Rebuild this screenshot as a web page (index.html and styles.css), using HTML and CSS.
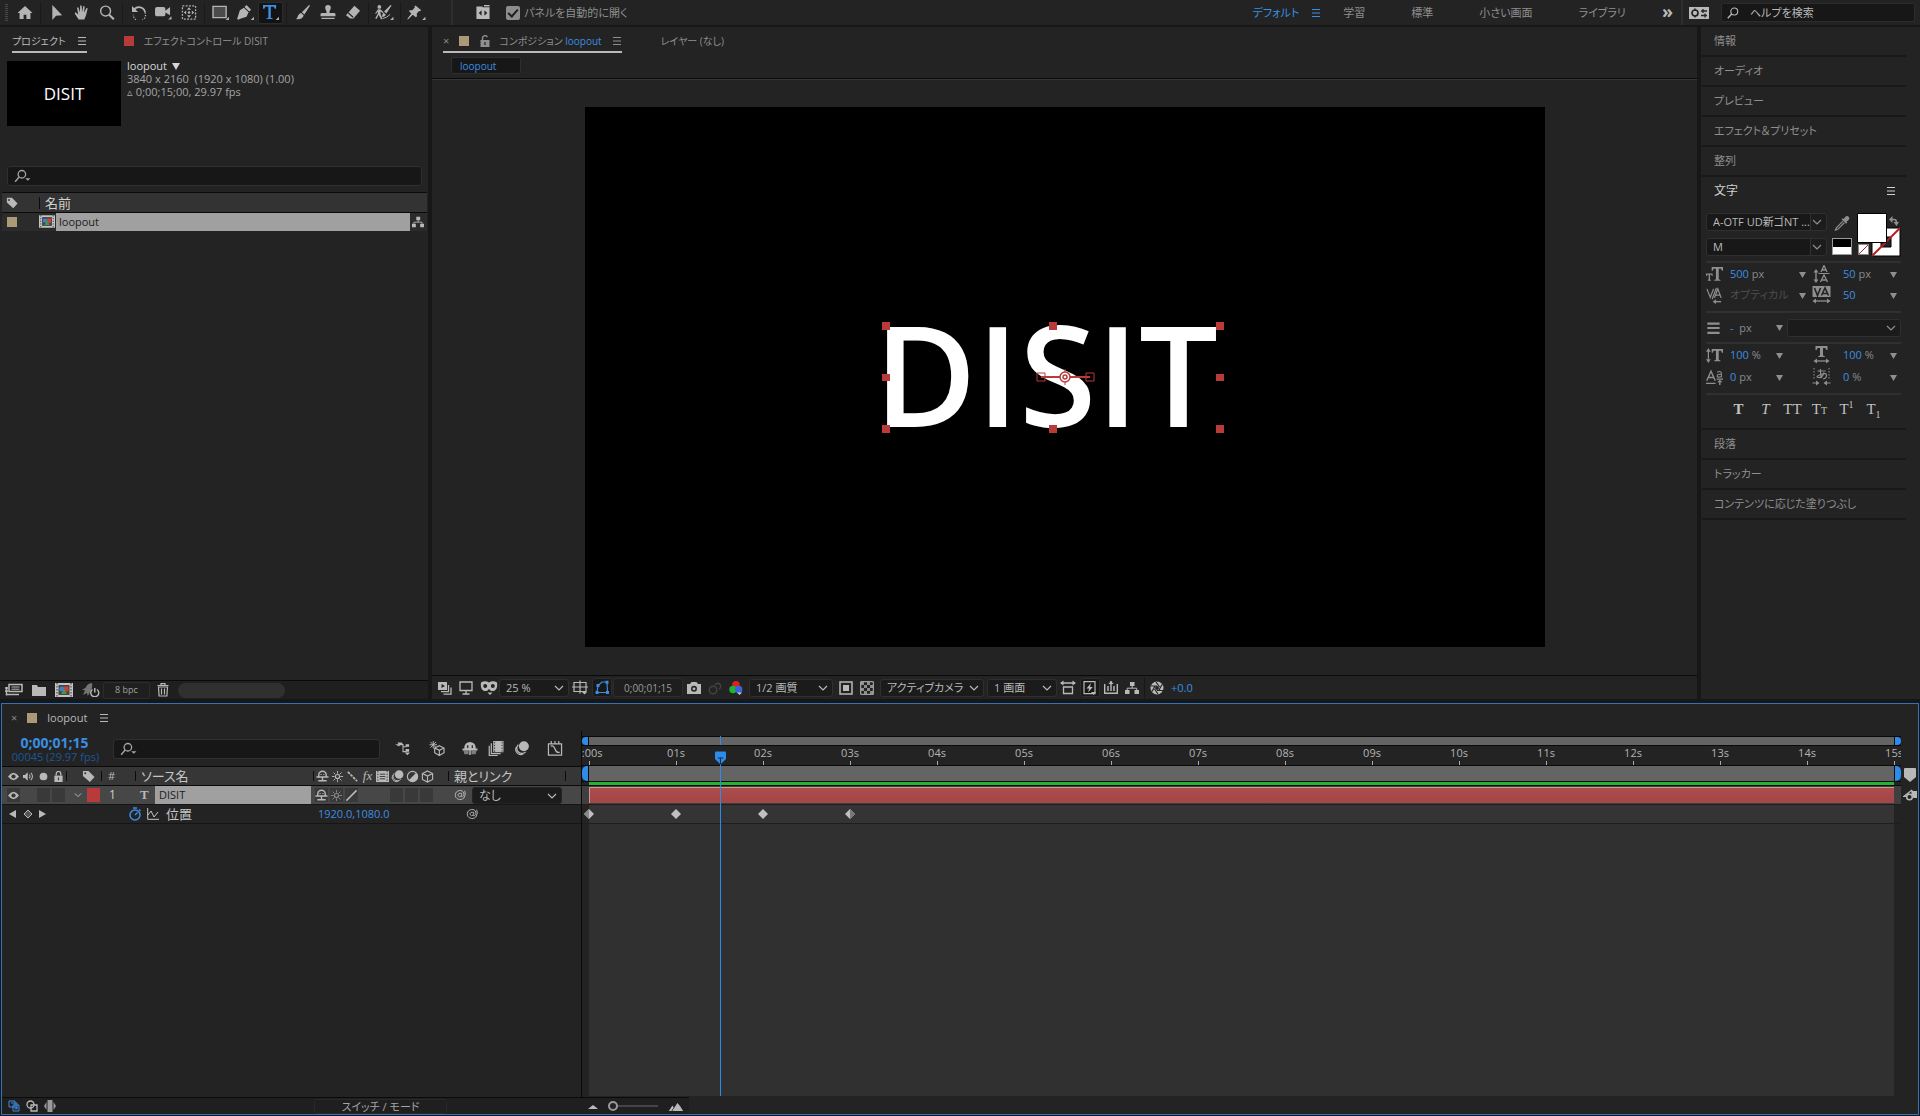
FILE: index.html
```html
<!DOCTYPE html>
<html lang="ja">
<head>
<meta charset="utf-8">
<meta name="viewport" content="width=device-width, initial-scale=1">
<title>loopout</title>
<link rel="stylesheet" href="styles.css">
</head>
<body>
<svg class="sprite" aria-hidden="true">
  <symbol id="home" viewBox="0 0 16 16"><path d="M8 1 0 8.500h2.200V15h4.300v-4.500h3V15h4.300V8.500H16z"/></symbol>
  <symbol id="arrow" viewBox="0 0 16 16"><path d="M3 0v16l4-4.500 6.500-.6z"/></symbol>
  <symbol id="hand" viewBox="0 0 16 16"><path d="M4.500 15.500C3 13 1.500 11 .4 9.200c-.5-1 .7-1.700 1.500-.9L4 10.300 2.800 3.500c-.1-1.200 1.300-1.400 1.600-.3L5.800 8 6 1.300C6 0 7.600 0 7.700 1.300L8 7.800l1.200-6C9.500.6 10.900.9 10.800 2L10.200 8.300l2.300-4.500c.5-1 1.700-.5 1.400.6-.8 2.600-1 4.600-1.800 7.100-.5 1.600-1.200 2.500-1.600 4z"/></symbol>
  <symbol id="loupe" viewBox="0 0 16 16"><g fill="none" stroke="currentColor"><circle cx="6.500" cy="6.500" r="5.300" stroke-width="1.500"/><path d="m10.300 10.300 5 5" stroke-width="2.200"/></g></symbol>
  <symbol id="search" viewBox="0 0 16 16"><g fill="none" stroke="currentColor"><circle cx="9.700" cy="6" r="4.600" stroke-width="1.500"/><path d="M6.300 9.300 1 15" stroke-width="1.800"/></g></symbol>
  <symbol id="searchmenu" viewBox="0 0 20 16"><g fill="none" stroke="currentColor"><circle cx="8.700" cy="6" r="4.300" stroke-width="1.500"/><path d="M5.600 9.200 1 14.500" stroke-width="1.600"/></g><path d="M12.500 10.500h6l-3 3z"/></symbol>
  <symbol id="rotate" viewBox="0 0 16 16"><path d="M2.500 5.500A6.500 6.500 0 0 1 14.500 8" fill="none" stroke="currentColor" stroke-width="1.800"/><path d="M14.500 8A6.500 6.500 0 1 1 2 10.500" fill="none" stroke="currentColor" stroke-width="1.400" stroke-dasharray="1.300 1.500"/><path d="M.5 1v6.500H7z"/></symbol>
  <symbol id="camera" viewBox="0 0 18 16"><path d="M0 4q0-2 2-2h7q2 0 2 2v2l5-4v9l-5-3v2q0 2-2 2H2q-2 0-2-2z"/><path d="M17.500 12v3.500H14z"/></symbol>
  <symbol id="panbehind" viewBox="0 0 16 16"><rect x="1" y="1" width="14" height="14" fill="none" stroke="currentColor" stroke-width="1.400" stroke-dasharray="2 1.500"/><path d="m8 2.500 2.200 2.500H5.800zm0 11L5.800 11h4.400zM2.500 8 5 5.800v4.400zm11 0L11 10.200V5.800z"/><circle cx="8" cy="8" r="1.300"/></symbol>
  <symbol id="rect" viewBox="0 0 18 16"><path d="M1 1.500h14v12H1z" fill="#4b4b4b" stroke="currentColor" stroke-width="1.500"/><path d="M18 12.500V16h-3.500z"/></symbol>
  <symbol id="pen" viewBox="0 0 18 16"><path d="M10 0 15 5l-2 2-5-5zM7.300 2.800l5 4.800-2.200 5L1 15.500l4.500-5a1.500 1.500 0 1 1 .8.800L2 15.600 0 15 3 5.500z"/><path d="M18 12.500V16h-3.500z"/></symbol>
  <symbol id="type" viewBox="0 0 18 16"><path d="M1 0h14v4h-1.500l-1-2.200H9.300v11.700l2.200.8V15h-7v-.7l2.200-.8V1.800H3.500L2.500 4H1z"/><path d="M18 12.500V16h-3.500z" fill="#b4b4b4"/></symbol>
  <symbol id="brush" viewBox="0 0 16 16"><path d="m15.500.5-6 9.500-2.700-2.300L14.500 0zM6 8.500l2.700 2.400C8 14.500 4.500 15.800.5 15 3 13.500 2 9.500 6 8.500z"/></symbol>
  <symbol id="stamp" viewBox="0 0 16 16"><path d="M5 3a3 3 0 0 1 6 0c0 2-1.500 2.500-1.500 5.500H15q1 0 1 2V12H0v-1.500q0-2 1-2h5.500C6.500 5.500 5 5 5 3zM1 13.500h14V15H1z"/></symbol>
  <symbol id="eraser" viewBox="0 0 16 16"><path d="m9.500.8 6 5.200-7 8.500H5L.5 10.800z"/><path d="m2.800 8.300 5.400 4.800" stroke="#232323" stroke-width="1.200"/></symbol>
  <symbol id="roto" viewBox="0 0 20 16"><circle cx="4.500" cy="2" r="2"/><path d="m3 4.500 3 .2 3 3-.8 1-2.400-2v3l2 5-1.400.8-2.600-5L1.500 15l-1.400-.8L3 9 2.500 7 1 9.500 0 9zM17.500.5 12 9 9.500 7 16.500 0zM9 8.300l2.400 2c-1 2.200-2.400 2.500-4.400 2 1-1 .5-3 2-4z"/><path d="M8 14.500q5-1 8-4.500" fill="none" stroke="currentColor"/><path d="M19.500 12.500V16H16z"/></symbol>
  <symbol id="pin" viewBox="0 0 20 16"><path d="m9 .5 6 5.200-1.300 1-1-.3-2.500 3 .3 2.600-1.200 1L6 10.500 1.500 15 0 15.500.7 14 4.500 9 1.800 6.500l1.200-1 2.500.2 2.700-3L7.800 1.600z"/><path d="M19.500 12.500V16H16z"/></symbol>
  <symbol id="panels" viewBox="0 0 16 16"><path d="M1 1.500h6.500v1H15V15H1z"/><path d="M9 0h6v1.500H9z"/><path d="M6.500 5.500v6L3.500 8.500zm3 0v6l3-3z" fill="#232323"/></symbol>
  <symbol id="menu" viewBox="0 0 10 10"><path d="M1 1.500h8M1 5h8M1 8.500h8" fill="none" stroke="currentColor" stroke-width="1.200"/></symbol>
  <symbol id="tag" viewBox="0 0 14 14"><path d="M1 1h6l6.500 6.500-5 5.500L1 6.500z"/><circle cx="3.500" cy="3.500" r="1.100" fill="#333"/></symbol>
  <symbol id="comp" viewBox="0 0 18 14"><path d="M0 0h18v14H0z" fill="#c4c4c4"/><path d="M2 0v14M16 0v14" stroke="#333" stroke-dasharray="1.500 1.500"/><path d="M3.500 2h11v10h-11z" fill="#444"/><path d="M8.500 3.500h5v5h-5z" fill="#cf4039"/><circle cx="6.800" cy="6" r="2.500" fill="#3f7fd0"/><path d="m9 5.500 3 5.500H6z" fill="#3f9a46"/></symbol>
  <symbol id="flow" viewBox="0 0 14 14"><path d="M5 1h4.500v4H5zM0 9h4.500v4H0zm9.500 0H14v4H9.500z"/><path d="M7.200 5v2.200M2.200 9V7.200h9.500V9" fill="none" stroke="currentColor"/></symbol>
  <symbol id="interpret" viewBox="0 0 18 14"><path d="M4 1.500h13v7H4z" fill="none" stroke="currentColor" stroke-width="1.500"/><path d="M6.500 4h8M6.500 6.200h8" stroke="currentColor"/><path d="M1.500 4v8.500M0 5h3M0 8h3M2 11.500h12" fill="none" stroke="currentColor" stroke-width="1.500"/></symbol>
  <symbol id="folder" viewBox="0 0 14 12"><path d="M0 1h5l1 2h8v9H0z"/></symbol>
  <symbol id="rocket" viewBox="0 0 18 14"><path d="M10 0Q5 .5 3.500 5L0 6.500l3 1L1 12l4-2 .8 3L8 9q3-4 2-9z" opacity=".55"/><path d="M10.500 6.500a4 4 0 1 0 4.500 0M12.800 5v4.500" fill="none" stroke="currentColor" stroke-width="1.400"/></symbol>
  <symbol id="trash" viewBox="0 0 12 14"><path d="M1.500 4h9l-.6 9H2.100zM.5 2.500h11M4 2V.7h4V2M4.500 5.500v6m3-6v6" fill="none" stroke="currentColor" stroke-width="1.200"/></symbol>
  <symbol id="stack" viewBox="0 0 14 14"><path d="M0 1h9v8H0z"/><path d="M3.500 3v4L7 5z" fill="#232323"/><path d="M10.500 4v6.700H3M13 6.500v6.700H5.500" fill="none" stroke="currentColor" stroke-width="1.300"/></symbol>
  <symbol id="monitor" viewBox="0 0 14 14"><path d="M1 1h12v8.500H1zM7 9.500v3M3.500 13h7" fill="none" stroke="currentColor" stroke-width="1.300"/></symbol>
  <symbol id="mask" viewBox="0 0 18 14"><path d="M1 1.500Q0 8 4 10h3l2-2 2 2h3q4-2 3-8.500Q13-1 9 1.500 5-1 1 1.500z"/><circle cx="5.200" cy="5" r="2" fill="#232323"/><circle cx="12.800" cy="5" r="2" fill="#232323"/><path d="M7.500 11.500h5L10 14z"/></symbol>
  <symbol id="guides" viewBox="0 0 16 14"><path d="M2 2h12v9H2zM8 0v13M0 6.500h16" fill="none" stroke="currentColor" stroke-width="1.200"/><path d="M10 11.500h5L12.500 14z"/></symbol>
  <symbol id="shape" viewBox="0 0 16 14"><path d="M3 12 4 5l4-3.500h5L13.500 12z" fill="none" stroke="currentColor" stroke-width="1.200"/><path d="M1.500 10.500h3v3h-3zm10.500 0h3v3h-3zM11.500.2h3v3h-3zM2.500 3.500h3v3h-3z"/></symbol>
  <symbol id="photo" viewBox="0 0 14 14"><path d="M0 3h3l1.500-2h5L11 3h3v10H0z"/><circle cx="7" cy="7.800" r="3" fill="#232323"/><circle cx="7" cy="7.800" r="1.400"/></symbol>
  <symbol id="ghost" viewBox="0 0 14 14"><g fill="none" stroke="#444" stroke-width="1.400"><circle cx="5" cy="9" r="3.800"/><path d="M7 4a3 3 0 1 1 4 4"/></g></symbol>
  <symbol id="rgb" viewBox="0 0 14 14"><circle cx="7" cy="3.800" r="3.700" fill="#e02020"/><circle cx="4" cy="8.500" r="3.700" fill="#1fb52b"/><circle cx="9.700" cy="8.500" r="3.700" fill="#3b62dd"/><path d="M8 11.500h5L10.500 14z" fill="#ccc"/></symbol>
  <symbol id="roi" viewBox="0 0 14 14"><path d="M1 1h12v12H1z" fill="none" stroke="currentColor" stroke-width="1.500"/><path d="M4 4h6v6H4z"/></symbol>
  <symbol id="checker" viewBox="0 0 14 14"><path d="M.7.700h12.600v12.600H.7z" fill="none" stroke="currentColor"/><path d="M1 1h3v3H1zm6 0h3v3H7zM4 4h3v3H4zm6 0h3v3h-3zM1 7h3v3H1zm6 0h3v3H7zm-3 3h3v3H4zm6 0h3v3h-3z" opacity=".7"/></symbol>
  <symbol id="aspect" viewBox="0 0 16 14"><path d="M3 2.500h10M3.500 6.500h9V13h-9z" fill="none" stroke="currentColor" stroke-width="1.300"/><path d="M3.500 0v5L0 2.500zm9 0v5L16 2.500z"/></symbol>
  <symbol id="fast" viewBox="0 0 14 14"><path d="M1 .7h11v12H1z" fill="none" stroke="currentColor" stroke-width="1.200"/><path d="M8 2 3.500 7.500h2.700L5 11.500 9.800 6H7zM8 11h5l-2.500 3z"/></symbol>
  <symbol id="tlicon" viewBox="0 0 14 14"><path d="M.7 3v9.300h12.600V3M4 5v5M10 5v5M7 0v10" fill="none" stroke="currentColor" stroke-width="1.400"/><path d="M4.500 3h5L7 0z"/></symbol>
  <symbol id="aperture" viewBox="0 0 14 14"><circle cx="7" cy="7" r="6.500"/><path d="m6 1 3.500 5M12 3.500l-3 5.500M13 9.500H7M8 13 4.500 8M2 10.500 5 5M1 5h6" stroke="#232323" stroke-width="1.200"/><circle cx="7" cy="7" r="1.900" fill="#232323"/></symbol>
  <symbol id="chev" viewBox="0 0 10 6"><path d="m1 1 4 4 4-4" fill="none" stroke="currentColor" stroke-width="1.200"/></symbol>
  <symbol id="down" viewBox="0 0 8 8"><path d="M0 1h8L4 8z"/></symbol>
  <symbol id="lock" viewBox="0 0 10 12"><path d="M.5 5h9v7h-9z"/><path d="M2.500 5V3a2.500 2.500 0 0 1 5 0v2" fill="none" stroke="currentColor" stroke-width="1.400"/><path d="M4.400 7h1.200v3H4.400z" fill="#333"/></symbol>
  <symbol id="unlock" viewBox="0 0 10 12"><path d="M.5 5h9v7h-9z"/><path d="M2.500 5V3a2.500 2.500 0 0 1 4.800-.8" fill="none" stroke="currentColor" stroke-width="1.400"/><path d="M4.400 7h1.200v3H4.400z" fill="#232323"/></symbol>
  <symbol id="help" viewBox="0 0 20 12"><path d="M0 0h20v12H0z"/><circle cx="6" cy="6" r="3" fill="none" stroke="#232323" stroke-width="1.700"/><path d="M6 1.500v2m0 5v2" stroke="#232323" stroke-width="1.500"/><path d="M12 4h6m-6 4.500h6M14 2v4m2 .5v4" stroke="#232323" stroke-width="1.300"/></symbol>
  <symbol id="dropper" viewBox="0 0 16 16"><path d="M11 1.500q2-2.500 4-.8t-.5 4L12.800 6l.8 1-1.200 1.200L7.500 3.500l1.300-1.200.8.800z"/><path d="m9 5.500-7 7L1 15l2.500-.8 7-7" fill="none" stroke="currentColor" stroke-width="1.300"/></symbol>
  <symbol id="swap" viewBox="0 0 10 10"><path d="M2 3.500h3q2.500 0 2.500 3" fill="none" stroke="currentColor" stroke-width="1.700"/><path d="M0 3.500 3.500 0v7zM7.500 10 4.500 6H10z"/></symbol>
  <symbol id="flowmini" viewBox="0 0 18 16"><path d="M0 2.500h4l-1.500-2h5l1.500 2H6L4.500 5z"/><path d="M5 3h4v8h4M9 5.500h4" fill="none" stroke="currentColor" stroke-width="1.200"/><path d="M12 2.500h4v3h-4zM12 8h4v3h-4zM11 12h6l-3 3z"/></symbol>
  <symbol id="draft3d" viewBox="0 0 16 16"><path d="M4 0v8M0 4h8M1 1l6 6M7 1 1 7" stroke="currentColor"/><path d="m10.500 5 5 2.500v5l-5 3-5-3v-5zM5.500 7.500l5 2.500 5-2.500M10.500 10v5.500" fill="none" stroke="currentColor" stroke-width="1.200"/></symbol>
  <symbol id="shy" viewBox="0 0 16 16"><path d="M2 8V6.500a6 5.500 0 0 1 12 0V8h2v2H0V8z"/><path d="M5.500 4.500v3M10.500 4.500v3" stroke="#333" stroke-width="1.500"/><path d="M1 10h5.500v4H2zm8.500 0H15l-1 4H9.500z" opacity=".6"/><path d="M7.200 9h1.600v6H7.200z"/></symbol>
  <symbol id="shysw" viewBox="0 0 14 14"><path d="M3 7V5a4 3.600 0 0 1 8 0v2M.5 7.500h13M5.500 4.500v1M8.500 4.500v1M7 8v4.500M2.500 11.500h9" fill="none" stroke="currentColor" stroke-width="1.500"/></symbol>
  <symbol id="frames" viewBox="0 0 16 16"><path d="M5 0h11v12H5z"/><path d="M6.500 1v11m8-11v11" stroke="#333" stroke-dasharray="1.500 1.500"/><path d="M3 2.500v11h10M.8 5v10.500h9" fill="none" stroke="currentColor" stroke-width="1.300"/></symbol>
  <symbol id="blur" viewBox="0 0 16 16"><circle cx="10" cy="5.500" r="5.300"/><g fill="none" stroke="currentColor" stroke-width="1.200"><path d="M4 4a5.300 5.300 0 0 0 8 7.500M2 6.500a5.300 5.300 0 0 0 7.500 7"/></g></symbol>
  <symbol id="graph" viewBox="0 0 16 16"><path d="M1 3h14v12H1zM3.500 5.500q3-1.500 4.500 3t5 3.500M4 0v3m4-3v3m4-3v3" fill="none" stroke="currentColor" stroke-width="1.300"/></symbol>
  <symbol id="eye" viewBox="0 0 12 10"><path d="M0 5q6-8 12 0-6 8-12 0z"/><circle cx="6" cy="5" r="2.300" fill="#333"/></symbol>
  <symbol id="sound" viewBox="0 0 14 12"><path d="M0 4h2.500L6 .5v11L2.500 8H0z"/><path d="M8 3.500q1.700 2.500 0 5M10 1.500q4 4.500 0 9" fill="none" stroke="currentColor" stroke-width="1.300"/></symbol>
  <symbol id="dot" viewBox="0 0 10 10"><circle cx="5" cy="5" r="3.500"/></symbol>
  <symbol id="sun" viewBox="0 0 14 14"><path d="M7 1v3m0 6v3M1 7h3m6 0h3M2.700 2.700l2 2m4.600 4.600 2 2M2.700 11.300l2-2m4.600-4.600 2-2" stroke="currentColor"/><circle cx="7" cy="7" r="2.200" fill="none" stroke="currentColor" stroke-width="1.200"/></symbol>
  <symbol id="slash" viewBox="0 0 14 14"><path d="m2 2 10 10" stroke="currentColor" stroke-width="1.800" stroke-dasharray="3 1"/></symbol>
  <symbol id="best" viewBox="0 0 14 14"><path d="M1.500 12.500 12.500 1.500" stroke="currentColor" stroke-width="1.600"/></symbol>
  <symbol id="filmsw" viewBox="0 0 14 14"><path d="M0 1h14v12H0z"/><path d="M2 1v12M12 1v12" stroke="#333" stroke-dasharray="1.500 1.500"/><path d="M4 4.500h6M4 7h6M4 9.500h6" stroke="#333"/></symbol>
  <symbol id="adjust" viewBox="0 0 14 14"><circle cx="7" cy="7" r="5.500" fill="none" stroke="currentColor" stroke-width="1.200"/><path d="M11 3A5.500 5.500 0 0 1 3 11z" /></symbol>
  <symbol id="cube" viewBox="0 0 14 14"><path d="m7 1 5.500 2.800v6.400L7 13l-5.500-2.800V3.800zM1.500 3.800 7 6.500l5.500-2.700M7 6.500V13" fill="none" stroke="currentColor" stroke-width="1.200"/></symbol>
  <symbol id="spiral" viewBox="0 0 14 14"><path d="M8.500 6a2 2 0 1 0-.5 2.500q1.500-1.500 1-4M8 8.500c2 1.500 4-1 3.500-3.500C10.500 0 2 1 1.500 6.500 1 12 8 14 11.500 10.500M12.500 2q2 4-1 8.500" fill="none" stroke="currentColor" stroke-width="1.100"/></symbol>
  <symbol id="watch" viewBox="0 0 14 14"><circle cx="7" cy="8" r="5" fill="none" stroke="currentColor" stroke-width="1.500"/><path d="M7 8l2.500-2.500M5 1h4M11 2.500l1.500 1.500" stroke="currentColor" stroke-width="1.400"/></symbol>
  <symbol id="minigraph" viewBox="0 0 12 12"><path d="M.7 0v11.300H12M1 7l3-4 3 6 4-5" fill="none" stroke="currentColor"/></symbol>
  <symbol id="prevkey" viewBox="0 0 8 8"><path d="M7 0v8L0 4z"/></symbol>
  <symbol id="nextkey" viewBox="0 0 8 8"><path d="M1 0v8l7-4z"/></symbol>
  <symbol id="keyhole" viewBox="0 0 10 10"><path d="m5 1 4 4-4 4-4-4z" fill="#555" stroke="currentColor"/></symbol>
  <symbol id="key" viewBox="0 0 10 10"><path d="m5 0 5 5-5 5-5-5z"/></symbol>
  <symbol id="keyfirst" viewBox="0 0 10 10"><path d="m5 0 5 5-5 5-5-5z"/><path d="M5 0v10L0 5z" fill="#888"/></symbol>
  <symbol id="keylast" viewBox="0 0 10 10"><path d="m5 0 5 5-5 5-5-5z"/><path d="M5 0v10l5-5z" fill="#777"/></symbol>
  <symbol id="head" viewBox="0 0 12 14"><path d="M0 1q0-1 1-1h10q1 0 1 1v7l-6 6-6-6z" fill="#2d8ceb"/><path d="M3 7h6M6 7v7" stroke="#1b2a3c" stroke-width="1.200"/></symbol>
  <symbol id="marker" viewBox="0 0 12 14"><path d="M0 1q0-1 1-1h10q1 0 1 1v8l-6 5-6-5z"/></symbol>
  <symbol id="layermark" viewBox="0 0 14 12"><path d="M9 2h5v7h-3.500L9 6z"/><path d="M9 1 .8 7.500h3M9 1v4" fill="none" stroke="currentColor" stroke-width="1.200"/><circle cx="6.500" cy="8" r="2.800" fill="none" stroke="currentColor" stroke-width="1.500"/></symbol>
  <symbol id="layersw" viewBox="0 0 12 12"><path d="M1 1h6v6H1zM3 3h6v6M5 5h6v6H5zM8 6.500v3M6.500 8h3" fill="none" stroke="currentColor"/></symbol>
  <symbol id="modes" viewBox="0 0 12 12"><circle cx="4.500" cy="4.500" r="3.500" fill="none" stroke="currentColor" stroke-width="1.300"/><path d="M5 5h6v6H5z" fill="none" stroke="currentColor" stroke-width="1.300"/></symbol>
  <symbol id="inout" viewBox="0 0 12 12"><path d="M3.500 0h5v12h-5zM2.500 2v8L0 6zm7 0v8L12 6z" opacity=".8"/></symbol>
  <symbol id="hillsm" viewBox="0 0 10 6"><path d="m0 6 5-4 2 1.500L10 6z"/></symbol>
  <symbol id="hill" viewBox="0 0 16 10"><path d="m0 10 4-6 1.500 2L3 10zm3.800 0L9.500 1l3 3.500L16 10z"/></symbol>
  <symbol id="leading" viewBox="0 0 18 18"><path d="M3.500 6v10" stroke="currentColor" stroke-width="1.400"/><path d="M1 7.500 3.500 4 6 7.500zm0 7L3.500 18 6 14.500z"/><path d="M6 8.500h11" stroke="currentColor"/><path d="M8 17l3.500-7 3.500 7M9.300 15h4.500M8.500 7l3-6.500L14.500 7M9.500 5h4" fill="none" stroke="currentColor" stroke-width="1.300"/></symbol>
  <symbol id="kern" viewBox="0 0 18 18"><path d="m1 2 3.500 9L8 2M6.500 13 11 1M9 11.500 12.500 2 16 11.500M10 8.500h5" fill="none" stroke="currentColor" stroke-width="1.300"/><path d="M9 15.500h7" stroke="currentColor" stroke-width="1.500"/><path d="M7 15.500 10.500 13v5z"/></symbol>
  <symbol id="track" viewBox="0 0 18 18"><path d="M0 0h18v11H0z"/><path d="m2 2 3 7.500L8 2M9 9.500 12.500 2 16 9.500M10 7.500h5" fill="none" stroke="#232323" stroke-width="1.600"/><path d="M2 15h14" stroke="currentColor" stroke-width="1.300"/><path d="M0 15l3.500-2.500v5zm18 0-3.500-2.500v5z"/></symbol>
  <symbol id="weight" viewBox="0 0 16 16"><path d="M1 3h14M1 8h14M1 13.500h14" stroke="currentColor" stroke-width="2.500"/></symbol>
  <symbol id="size" viewBox="0 0 18 16"><path d="M6 0h12v4h-1.200l-.8-2h-2.500v11l1.800.7v.8H8.700v-.8l1.800-.7V2H8L7.200 4H6zM0 7h7v2.500h-.8L5.800 8.200H4.300v5l1 .5v.8H1.800v-.8l1-.5v-5H1.300L.8 9.500H0z"/></symbol>
  <symbol id="vscale" viewBox="0 0 18 16"><path d="M6 1h12v4h-1.200L16 3h-2.500v9.500l1.800.7v.8H8.700v-.8l1.800-.7V3H8l-.8 2H6z"/><path d="M2.500 3v9" stroke="currentColor" stroke-width="1.300"/><path d="M0 4 2.500 0 5 4zm0 8 2.500 4L5 12z"/></symbol>
  <symbol id="hscale" viewBox="0 0 18 18"><path d="M3 0h12v4h-1.200L13 2h-2.500v7.500l1.800.7v.8H5.700v-.8l1.800-.7V2H5l-.8 2H3z"/><path d="M3 15h12" stroke="currentColor" stroke-width="1.300"/><path d="M1 15l3.500-2.500v5zm16 0-3.500-2.500v5z"/></symbol>
  <symbol id="baseline" viewBox="0 0 16 16"><path d="m.7 11 4-9 4 9M2.300 8h5M0 13.500h9M10 9.500h6M13 15v-3" fill="none" stroke="currentColor" stroke-width="1.300"/><path d="m10.500 12.500 2.500-2.500 2.500 2.500z"/><path d="M10.500 3q4-1.500 4 1v4M14.500 5q-4-.5-4 1.500t4 .5" fill="none" stroke="currentColor"/></symbol>
  <symbol id="tsume" viewBox="0 0 18 18"><path d="M1.500 0v12M16.500 0v12" stroke="currentColor" stroke-dasharray="1.500 1.500"/><path d="M5 3h8M8 1q-.5 6 1.500 9M11.500 4.500Q10 10 6 9.500T9 6q5-1.500 5 1.500T10.500 11" fill="none" stroke="currentColor" stroke-width="1.200"/><path d="M0 15h4m10 0h4" stroke="currentColor" stroke-width="1.200"/><path d="M7 15l-3.500-2.500v5zm4 0 3.500-2.500v5z"/></symbol>
</svg>

<div class="app">
  <header class="toolbar">
    <span class="grip"></span>
    <button class="tool" aria-label="ホーム"><svg><use href="#home"/></svg></button>
    <i class="bar-sep"></i>
    <button class="tool" aria-label="選択ツール"><svg><use href="#arrow"/></svg></button>
    <button class="tool" aria-label="手のひらツール"><svg><use href="#hand"/></svg></button>
    <button class="tool" aria-label="ズームツール"><svg><use href="#loupe"/></svg></button>
    <i class="bar-sep"></i>
    <button class="tool" aria-label="回転ツール"><svg><use href="#rotate"/></svg></button>
    <button class="tool" aria-label="カメラツール"><svg class="wide"><use href="#camera"/></svg></button>
    <button class="tool" aria-label="アンカーポイントツール"><svg><use href="#panbehind"/></svg></button>
    <i class="bar-sep"></i>
    <button class="tool" aria-label="長方形ツール"><svg class="wide"><use href="#rect"/></svg></button>
    <button class="tool" aria-label="ペンツール"><svg class="wide"><use href="#pen"/></svg></button>
    <button class="tool active" aria-label="文字ツール"><svg class="wide"><use href="#type"/></svg></button>
    <i class="bar-sep"></i>
    <button class="tool" aria-label="ブラシツール"><svg><use href="#brush"/></svg></button>
    <button class="tool" aria-label="コピースタンプツール"><svg><use href="#stamp"/></svg></button>
    <button class="tool" aria-label="消しゴムツール"><svg><use href="#eraser"/></svg></button>
    <i class="bar-sep"></i>
    <button class="tool" aria-label="ロトブラシツール"><svg class="wide"><use href="#roto"/></svg></button>
    <i class="bar-sep"></i>
    <button class="tool" aria-label="パペットピンツール"><svg class="wide"><use href="#pin"/></svg></button>
    <i class="bar-sep strong"></i>
    <svg class="panels-icon"><use href="#panels"/></svg>
    <label class="auto-open"><input type="checkbox" checked><span>パネルを自動的に開く</span></label>
    <nav class="workspaces">
      <a href="#" class="current">デフォルト</a>
      <button class="plain blue" aria-label="メニュー"><svg class="s10"><use href="#menu"/></svg></button>
      <a href="#">学習</a><a href="#">標準</a><a href="#">小さい画面</a><a href="#">ライブラリ</a>
    </nav>
    <button class="plain more">»</button>
    <i class="bar-sep strong end"></i>
    <svg class="help-icon"><use href="#help"/></svg>
    <label class="help-search"><svg><use href="#search"/></svg><input type="text" placeholder="ヘルプを検索" aria-label="ヘルプを検索"></label>
  </header>

  <main class="upper">
    <section class="panel project">
      <div class="tabs">
        <a href="#" class="tab selected"><span>プロジェクト</span><svg class="s10"><use href="#menu"/></svg></a>
        <a href="#" class="tab"><i class="chip red"></i><span>エフェクトコントロール DISIT</span></a>
      </div>
      <div class="summary">
        <div class="thumb">DISIT</div>
        <div class="meta">
          <div class="meta-name">loopout <svg class="s8"><use href="#down"/></svg></div>
          <div>3840 x 2160&nbsp; (1920 x 1080) (1.00)</div>
          <div>▵ 0;00;15;00, 29.97 fps</div>
        </div>
      </div>
      <label class="search"><svg><use href="#searchmenu"/></svg><input type="text" aria-label="プロジェクトを検索"></label>
      <table class="items">
        <colgroup><col class="c-label"><col class="c-gap"><col><col class="c-flow"></colgroup>
        <thead><tr><th><svg class="s12"><use href="#tag"/></svg></th><th class="name-head" colspan="2"><span>名前</span></th><th></th></tr></thead>
        <tbody><tr><td><i class="chip tan"></i></td><td><svg class="compicon"><use href="#comp"/></svg></td><td class="picked">loopout</td><td><svg class="s12"><use href="#flow"/></svg></td></tr></tbody>
      </table>
      <div class="project-foot">
        <button class="plain" aria-label="フッテージを変換"><svg class="w18"><use href="#interpret"/></svg></button>
        <button class="plain" aria-label="新規フォルダー"><svg class="w14"><use href="#folder"/></svg></button>
        <button class="plain" aria-label="新規コンポジション"><svg class="w18"><use href="#comp"/></svg></button>
        <button class="plain" aria-label="プロジェクト設定"><svg class="w18"><use href="#rocket"/></svg></button>
        <button class="bpc">8 bpc</button>
        <button class="plain" aria-label="削除"><svg class="w12"><use href="#trash"/></svg></button>
        <span class="hscroll"><i></i></span>
      </div>
    </section>

    <section class="panel composition">
      <div class="tabs">
        <a href="#" class="tab selected"><small>×</small><i class="chip tan"></i><svg class="s12 lock"><use href="#unlock"/></svg><span>コンポジション <b>loopout</b></span><svg class="s10"><use href="#menu"/></svg></a>
        <a href="#" class="tab"><span>レイヤー (なし)</span></a>
      </div>
      <div class="crumbs"><button>loopout</button></div>
      <div class="stage">
        <svg class="frame" viewBox="0 0 960 540">
          <rect width="960" height="540"/>
          <text class="title" x="289" y="320">DISIT</text>
          <g class="handles">
            <path d="M297 215h8v8h-8zM464 215h8v8h-8zM631 215h8v8h-8zM297 267h8v7h-8zM631 267h8v7h-8zM297 318h8v8h-8zM464 318h8v8h-8zM631 318h8v8h-8z"/>
          </g>
          <g class="anchor">
            <path d="M452 266h8v8h-8zM501 266h8v8h-8zM480 262v16"/>
            <path class="motion" d="M456 270h49"/>
            <circle cx="480" cy="270" r="5" fill="#fff"/><circle cx="480" cy="270" r="2"/>
          </g>
        </svg>
      </div>
      <div class="view-foot">
        <button class="plain"><svg class="w14"><use href="#stack"/></svg></button>
        <button class="plain"><svg class="w14"><use href="#monitor"/></svg></button>
        <button class="plain"><svg class="w18"><use href="#mask"/></svg></button>
        <span class="pick p70"><select aria-label="拡大率"><option>25 %</option></select><svg><use href="#chev"/></svg></span>
        <button class="plain"><svg class="w16"><use href="#guides"/></svg></button>
        <button class="plain boxed blue"><svg class="w16"><use href="#shape"/></svg></button>
        <button class="time">0;00;01;15</button>
        <button class="plain"><svg class="w14"><use href="#photo"/></svg></button>
        <button class="plain"><svg class="w14"><use href="#ghost"/></svg></button>
        <button class="plain"><svg class="w14"><use href="#rgb"/></svg></button>
        <span class="pick p84"><select aria-label="画質"><option>1/2 画質</option></select><svg><use href="#chev"/></svg></span>
        <button class="plain"><svg class="w14"><use href="#roi"/></svg></button>
        <button class="plain"><svg class="w14"><use href="#checker"/></svg></button>
        <span class="pick p104"><select aria-label="カメラ"><option>アクティブカメラ</option></select><svg><use href="#chev"/></svg></span>
        <span class="pick p70"><select aria-label="画面数"><option>1 画面</option></select><svg><use href="#chev"/></svg></span>
        <button class="plain"><svg class="w16"><use href="#aspect"/></svg></button>
        <button class="plain boxed"><svg class="w14"><use href="#fast"/></svg></button>
        <button class="plain"><svg class="w14"><use href="#tlicon"/></svg></button>
        <button class="plain"><svg class="w14"><use href="#flow"/></svg></button>
        <i class="bar-sep"></i>
        <button class="plain"><svg class="w14"><use href="#aperture"/></svg></button>
        <button class="plain blue">+0.0</button>
      </div>
    </section>

    <aside class="panel side">
      <a href="#" class="fold">情報</a>
      <a href="#" class="fold">オーディオ</a>
      <a href="#" class="fold">プレビュー</a>
      <a href="#" class="fold">エフェクト＆プリセット</a>
      <a href="#" class="fold">整列</a>
      <section class="character">
        <h2>文字 <svg class="s10"><use href="#menu"/></svg></h2>
        <div class="font-block">
          <div class="font-picks">
            <span class="pick split"><select aria-label="フォント"><option>A-OTF UD新ゴNT ...</option></select><svg><use href="#chev"/></svg></span>
            <span class="pick split"><select aria-label="スタイル"><option>M</option></select><svg><use href="#chev"/></svg></span>
          </div>
          <div class="dropper-col"><svg class="w16"><use href="#dropper"/></svg><i class="bw"></i></div>
          <svg class="swatches" viewBox="0 0 44 44">
            <path d="M15 15h28v28H15z" fill="#fff" stroke="#000"/><path d="M24 24h10v10H24z" fill="#222" stroke="#000"/><path d="M15 43 43 15" stroke="#b11f24" stroke-width="2"/>
            <path d="M.5.500h29v29H.500z" fill="#fff" stroke="#000"/>
            <path d="M1.500 31.500h10v10h-10z" fill="#fff" stroke="#888"/><path d="m2 41 9-9" stroke="#b11f24"/>
            <use href="#swap" x="32" y="3" width="10" height="10"/>
          </svg>
        </div>
        <div class="metrics">
          <svg><use href="#size"/></svg><span class="val"><button>500</button> px</span><svg class="tri"><use href="#down"/></svg>
          <svg><use href="#leading"/></svg><span class="val"><button>50</button> px</span><svg class="tri"><use href="#down"/></svg>
          <svg><use href="#kern"/></svg><span class="val off">オプティカル</span><svg class="tri"><use href="#down"/></svg>
          <svg><use href="#track"/></svg><span class="val"><button>50</button></span><svg class="tri"><use href="#down"/></svg>
        </div>
        <div class="stroke-row">
          <svg><use href="#weight"/></svg><span class="val"><button>-</button>&nbsp; px</span><svg class="tri"><use href="#down"/></svg>
          <span class="pick wide-pick"><select aria-label="線の種類"><option></option></select><svg><use href="#chev"/></svg></span>
        </div>
        <div class="metrics scale">
          <svg><use href="#vscale"/></svg><span class="val"><button>100</button> %</span><svg class="tri"><use href="#down"/></svg>
          <svg><use href="#hscale"/></svg><span class="val"><button>100</button> %</span><svg class="tri"><use href="#down"/></svg>
          <svg><use href="#baseline"/></svg><span class="val"><button>0</button> px</span><svg class="tri"><use href="#down"/></svg>
          <svg><use href="#tsume"/></svg><span class="val"><button>0</button> %</span><svg class="tri"><use href="#down"/></svg>
        </div>
        <div class="faux">
          <button><b>T</b></button><button><em>T</em></button><button>TT</button><button>T<small>T</small></button><button>T<sup>1</sup></button><button>T<sub>1</sub></button>
        </div>
      </section>
      <a href="#" class="fold">段落</a>
      <a href="#" class="fold">トラッカー</a>
      <a href="#" class="fold">コンテンツに応じた塗りつぶし</a>
    </aside>
  </main>

  <section class="timeline">
    <div class="tl-tab"><small>×</small><i class="chip tan"></i><span>loopout</span><svg class="s10"><use href="#menu"/></svg></div>
    <div class="tl-body">
      <div class="outline">
        <div class="controls">
          <div class="clock"><button class="now">0;00;01;15</button><span>00045 (29.97 fps)</span></div>
          <label class="search"><svg><use href="#searchmenu"/></svg><input type="text" aria-label="レイヤーを検索"></label>
          <div class="control-icons">
            <button class="plain"><svg class="w18"><use href="#flowmini"/></svg></button>
            <button class="plain apart"><svg class="w16"><use href="#draft3d"/></svg></button>
            <button class="plain apart"><svg class="w16"><use href="#shy"/></svg></button>
            <button class="plain"><svg class="w16"><use href="#frames"/></svg></button>
            <button class="plain"><svg class="w16"><use href="#blur"/></svg></button>
            <button class="plain apart"><svg class="w16"><use href="#graph"/></svg></button>
          </div>
        </div>
        <div class="row head">
          <span class="cell av"><svg><use href="#eye"/></svg><svg><use href="#sound"/></svg><svg><use href="#dot"/></svg><svg><use href="#lock"/></svg></span>
          <span class="cell tick label-head"><svg class="s12"><use href="#tag"/></svg></span>
          <span class="cell tick num">#</span>
          <span class="cell tick big">ソース名</span>
          <span class="cell tick switches"><svg><use href="#shysw"/></svg><svg><use href="#sun"/></svg><svg><use href="#slash"/></svg><em>fx</em><svg><use href="#filmsw"/></svg><svg><use href="#blur"/></svg><svg><use href="#adjust"/></svg><svg><use href="#cube"/></svg></span>
          <span class="cell tick big">親とリンク</span>
          <span class="cell tick"></span>
        </div>
        <div class="row layer">
          <span class="cell av slots"><i><svg><use href="#eye"/></svg></i><b></b><i></i><i></i></span>
          <span class="cell label-cell"><svg class="s8"><use href="#chev"/></svg><i class="chip red"></i></span>
          <span class="cell num">1</span>
          <span class="cell source"><span class="tt">T</span><span class="picked">DISIT</span></span>
          <span class="cell switches slots"><i><svg><use href="#shysw"/></svg></i><i><svg class="dim"><use href="#sun"/></svg></i><i><svg><use href="#best"/></svg></i><b></b><b></b><i></i><i></i><i></i></span>
          <span class="cell parent"><svg class="s12"><use href="#spiral"/></svg><span class="pick dark"><select aria-label="親とリンク"><option>なし</option></select><svg><use href="#chev"/></svg></span></span>
          <span class="cell"></span>
        </div>
        <div class="row prop">
          <span class="cell nav"><svg class="s8"><use href="#prevkey"/></svg><svg class="s10"><use href="#keyhole"/></svg><svg class="s8"><use href="#nextkey"/></svg></span>
          <span class="cell prop-name"><svg class="w14 blue"><use href="#watch"/></svg><svg class="s12"><use href="#minigraph"/></svg><span>位置</span></span>
          <span class="cell value"><button>1920.0,1080.0</button></span>
          <span class="cell prop-link"><svg class="s12"><use href="#spiral"/></svg></span>
        </div>
      </div>

      <div class="tracks">
        <div class="navigator"><i class="cap left"></i><i class="fill"></i><i class="cap right"></i></div>
        <ol class="ruler">
          <li>0:00s</li><li>01s</li><li>02s</li><li>03s</li><li>04s</li><li>05s</li><li>06s</li><li>07s</li><li>08s</li><li>09s</li><li>10s</li><li>11s</li><li>12s</li><li>13s</li><li>14s</li><li>15s</li>
        </ol>
        <div class="workarea"><i class="cap left"></i><i class="fill"></i><i class="cap right"></i></div>
        <div class="cache"><i></i></div>
        <div class="track-row bar-row"><i class="bar"></i></div>
        <div class="track-row key-row"><div class="keys">
          <svg style="left:0%"><use href="#keyfirst"/></svg><svg style="left:6.667%"><use href="#key"/></svg><svg style="left:13.333%"><use href="#key"/></svg><svg style="left:20%"><use href="#keylast"/></svg>
        </div></div>
        <div class="void"></div>
        <div class="playhead-layer"><div class="playhead" style="left:10%"><i></i><svg><use href="#head"/></svg></div></div>
      </div>
      <div class="gutter"><svg class="w12"><use href="#marker"/></svg><svg class="w14"><use href="#layermark"/></svg></div>
    </div>
    <div class="tl-foot">
      <div class="tl-foot-in">
        <span class="foot-icons"><svg class="s12 blue"><use href="#layersw"/></svg><svg class="s12"><use href="#modes"/></svg><svg class="s12"><use href="#inout"/></svg></span>
        <button class="mode">スイッチ / モード</button>
        <span class="zoomer"><svg class="hillsm"><use href="#hillsm"/></svg><input type="range" min="0" max="100" value="0" aria-label="ズーム"><svg class="w16"><use href="#hill"/></svg></span>
      </div>
    </div>
  </section>
</div>
</body>
</html>
```
FILE: styles.css
```css
:root {
  --bg: #232323;
  --gap: #171717;
  --ink: #8f8f8f;
  --lite: #b9b9b9;
  --blue: #3b8ee0;
  --well: #171717;
  --edge: #303030;
}
* { box-sizing: border-box; }
html, body { margin: 0; height: 100%; background: var(--gap); }
body, button, input, select {
  font-family: "Open Sans", "Noto Sans CJK JP", sans-serif;
  font-size: 11px;
  line-height: 14px;
  font-feature-settings: "palt";
  color: var(--lite);
}
body { overflow: hidden; }
button, input, select { margin: 0; padding: 0; border: 0; background: none; outline: 0; }
a { color: inherit; text-decoration: none; }
i { font-style: normal; }
svg { fill: currentColor; display: block; flex: none; overflow: visible; }
.sprite { position: absolute; width: 0; height: 0; }
.blue { color: var(--blue); }
.s8 { width: 8px; height: 8px; }
.s10 { width: 10px; height: 10px; }
.s12 { width: 12px; height: 12px; }
.w12 { width: 12px; height: 14px; }
.w14 { width: 14px; height: 14px; }
.w16 { width: 16px; height: 15px; }
.w18 { width: 18px; height: 14px; }
.chip { width: 10px; height: 10px; flex: none; display: block; }
.tan { background: #ac9978; }
.red { background: #b93a3a; }
.plain { display: grid; place-items: center; flex: none; }
.plain.blue { color: var(--blue); }

.app { height: 100vh; display: grid; grid-template-rows: 25px minmax(0, 672fr) minmax(0, 415fr); row-gap: 2px; }

/* toolbar */
.toolbar { display: flex; align-items: center; background: var(--bg); padding-left: 5px; white-space: nowrap; }
.grip { width: 3px; height: 18px; background: repeating-linear-gradient(#484848 0 1px, transparent 1px 2px); margin-right: 4px; }
.tool { width: 25px; height: 22px; display: grid; place-items: center; color: #b4b4b4; }
.tool svg { width: 16px; height: 15px; }
.tool svg.wide { width: 19px; }
.tool.active { background: #131313; color: var(--blue); border: 1px solid #2c2c2c; border-radius: 2px; }
.bar-sep { width: 1px; height: 22px; background: #1a1a1a; margin: 0 3px; flex: none; }
.bar-sep.strong { width: 2px; height: 25px; background: #2e2e2e; margin: 0 22px 0 22px; }
.bar-sep.strong.end { margin: 0 6px 0 8px; }
.panels-icon { width: 16px; height: 15px; }
.auto-open { display: flex; align-items: center; gap: 4px; margin-left: 15px; color: var(--ink); }
.auto-open input { appearance: none; width: 14px; height: 14px; background: #8d8d8d; border-radius: 2px; display: grid; place-items: center; }
.auto-open input::before { content: ""; width: 8px; height: 4px; border: solid #1c1c1c; border-width: 0 0 2px 2px; rotate: -48deg; translate: 0 -1px; }
.workspaces { display: flex; align-items: center; margin-left: auto; color: var(--ink); }
.workspaces a + a { margin-left: 46px; }
.workspaces .plain { margin: 0 22px 0 12px; }
.workspaces .current { color: var(--blue); }
.more { margin-left: 36px; padding-bottom: 4px; font-size: 18px; font-weight: 700; }
.help-icon { width: 20px; height: 12px; }
.help-search { display: flex; align-items: center; gap: 11px; width: 194px; height: 19px; margin: 0 5px 0 12px; padding-left: 5px; background: var(--well); border: 1px solid #2c2c2c; border-radius: 2px; }
.help-search svg { width: 12px; height: 12px; }
.help-search input { min-width: 0; flex: 1; }
input::placeholder { color: var(--lite); opacity: 1; }

/* upper panels */
.upper { display: grid; grid-template-columns: 428px minmax(0, 1fr) 219px; column-gap: 4px; min-height: 0; }
.panel { background: var(--bg); display: flex; flex-direction: column; min-width: 0; min-height: 0; }
.tabs { display: flex; height: 26px; color: var(--ink); flex: none; margin-left: 12px; white-space: nowrap; font-size: 10px; }
.tab { display: flex; align-items: center; height: 26px; padding-top: 2px; }
.tab.selected { border-bottom: 2px solid #b9b9b9; color: var(--lite); padding-top: 4px; }
.tab b { font-weight: 400; color: var(--blue); }
.project .selected { gap: 11px; margin-right: 37px; }
.project .tab .chip { margin-right: 10px; }
.composition .tabs { margin-left: 11px; }
.composition .selected { gap: 10px; margin-right: 39px; color: var(--ink); }
.composition .lock { margin-right: -2px; }
.summary { display: flex; gap: 6px; padding: 6px 7px 0; }
.thumb { width: 114px; height: 65px; margin-top: 2px; background: #000; color: #fff; font-size: 17px; display: grid; place-items: center; }
.meta { line-height: 13px; color: #a5a5a5; }
.meta-name { display: flex; align-items: center; gap: 5px; color: #d6d6d6; }
.search { display: flex; align-items: center; height: 20px; background: var(--well); border: 1px solid var(--edge); border-radius: 3px; padding-left: 6px; }
.search svg { width: 18px; height: 14px; color: #a5a5a5; }
.search input { flex: 1; min-width: 0; }
.project .search { margin: 40px 6px 6px 7px; }
.items { width: calc(100% - 3px); margin-left: 2px; border-collapse: collapse; table-layout: fixed; }
.items th { height: 20px; background: #333; border: solid #0a0a0a; border-width: 1px 0; padding: 0 0 0 4px; }
.items .name-head { font-size: 13px; font-weight: 400; text-align: left; color: #d0d0d0; padding: 0; }
.name-head span { display: block; border-left: 1px solid #0c0c0c; margin-left: 16px; padding-left: 5px; line-height: 12px; }
.items td { height: 18px; padding: 0; background: #2b2b2b; }
.items td .chip { margin-left: 5px; }
.items td:last-child svg { margin-left: 2px; }
.c-label { width: 21px; }
.c-gap { width: 33px; }
.c-flow { width: 17px; }
.compicon { width: 16px; height: 13px; margin-left: auto; margin-right: 1px; }
.picked { background: #a0a0a0; color: #1c1c1c; }
.items .picked { background: #a0a0a0; padding-left: 3px; }
.project-foot { display: flex; align-items: center; gap: 9px; height: 19px; margin-top: auto; border-top: 1px solid #0a0a0a; padding-left: 5px; flex: none; background: #1f1f1f; }
.bpc { width: 47px; height: 17px; font-size: 9px; border: 1px solid #2c2c2c; border-radius: 2px; color: #a0a0a0; margin: 0 -2px 0 -6px; }
.hscroll { flex: 1; height: 15px; margin-right: 19px; }
.hscroll i { display: block; width: 107px; height: 15px; border-radius: 8px; background: #303030; }

.crumbs { height: 26px; border-bottom: 1px solid #0a0a0a; box-shadow: 0 1px #353535; padding: 4px 19px 0; flex: none; }
.crumbs button { display: block; width: 70px; height: 17px; background: var(--well); border: 1px solid #2e2e2e; border-radius: 2px; color: var(--blue); text-align: left; padding-left: 8px; font-size: 10px; }
.stage { flex: 1; display: grid; place-items: center; min-height: 0; }
.frame { width: min(90%, 960px); }
.frame rect { fill: #000; }
.title { font-family: "Open Sans", sans-serif; font-weight: 600; font-size: 140px; fill: #fff; }
.handles { fill: #b83b3b; }
.anchor { fill: none; stroke: #b83b3b; }
.anchor circle { stroke-width: 1.5; }
.anchor .motion { stroke-width: 2; }
.view-foot { display: flex; align-items: center; height: 24px; flex: none; border-top: 1px solid #0a0a0a; padding-left: 6px; gap: 7px; white-space: nowrap; }
.pick { display: grid; grid-template-columns: 1fr auto; align-items: center; background: #1b1b1b; border: 1px solid #2f2f2f; border-radius: 3px; height: 18px; flex: none; }
.pick select { appearance: none; grid-area: 1 / 1 / 2 / 3; width: 100%; height: 16px; padding: 0 18px 0 6px; }
.pick svg { grid-area: 1 / 2; width: 10px; height: 6px; margin-right: 4px; pointer-events: none; }
.view-foot .pick { margin: 0 -4px 0 -6px; }
.p70 { width: 70px; }
.p84 { width: 84px; }
.p104 { width: 104px; }
.view-foot .p84 { margin: 0 -1px; }
.view-foot .p104 { margin: 0 -4px 0 -1px; }
.view-foot .pick + .pick { margin-left: 0; }
.view-foot .boxed, .view-foot .time { background: #181818; border: 1px solid #2d2d2d; border-radius: 3px; height: 19px; margin: 0 -3px; }
.view-foot .boxed { width: 20px; }
.view-foot .time { width: 70px; background: #1e1e1e; color: #9a9a9a; font-size: 10px; }
.view-foot .bar-sep { margin: 0 -2px; background: #171717; }

/* right column */
.side { padding: 0 14px 0 1px; color: var(--ink); }
.fold { display: flex; align-items: center; height: 30px; padding-left: 12px; border-bottom: 2px solid #181818; flex: none; }
.character { border-bottom: 2px solid #181818; padding: 0 5px 0 4px; height: 253px; flex: none; }
.character h2 { display: flex; justify-content: space-between; align-items: center; font: inherit; font-size: 12px; color: #d0d0d0; height: 28px; margin: 0 0 8px; padding: 0 5px 0 8px; }
.font-block { display: flex; padding-bottom: 4px; border-bottom: 2px solid #303030; }
.font-picks { width: 123px; display: grid; gap: 7px; align-content: start; }
.split { background: linear-gradient(90deg, #181818 0 103px, #303030 103px 104px, #1c1c1c 104px); }
.pick.split select { padding-right: 0; }
.dropper-col { width: 30px; display: grid; justify-items: center; align-content: space-between; padding: 3px 0 1px; height: 43px; }
.bw { width: 20px; height: 17px; border: 1px solid #999; background: linear-gradient(#000 50%, #fff 50%); }
.swatches { width: 44px; height: 44px; }
.metrics { display: grid; grid-template-columns: 24px 67px 13px 33px 45px 1fr; align-items: center; row-gap: 3px; padding: 2px 0 7px; border-bottom: 2px solid #303030; }
.metrics > svg, .stroke-row > svg { width: 17px; height: 17px; }
.metrics > svg:nth-child(6n+4) { margin-left: 2px; width: 19px; height: 18px; }
.metrics .tri, .stroke-row .tri { width: 7px; height: 7px; margin-left: 2px; }
.val { color: #8a8a8a; }
.val button { color: var(--blue); }
.val.off { color: #4d4d4d; }
.stroke-row { display: grid; grid-template-columns: 24px 44px 13px 1fr; align-items: center; height: 31px; border-bottom: 2px solid #303030; }
.stroke-row > svg { height: 14px; width: 15px; }
.metrics.scale { grid-template-columns: 24px 44px 36px 33px 45px 1fr; row-gap: 4px; }
.faux { display: grid; grid-template-columns: repeat(6, 1fr); padding: 2px 14px 0 19px; }
.faux button { font: 15px/20px "Liberation Serif", serif; color: #c2c2c2; height: 24px; white-space: nowrap; }
.faux b { font-weight: 700; }
.faux sup, .faux sub, .faux small { font-size: 10px; line-height: 0; color: inherit; }

/* timeline */
.timeline { margin: 2px 1px 1px; border: 1px solid #3273b8; background: var(--bg); display: flex; flex-direction: column; min-height: 0; }
.tl-tab { height: 27px; display: flex; align-items: center; gap: 10px; padding-left: 9px; flex: none; }
.tl-tab span { margin-right: 2px; }
.tl-body { flex: 1; display: grid; grid-template-columns: 580px minmax(0, 1fr) 17px; min-height: 0; }
.outline { border-right: 1px solid #0a0a0a; }
.controls { height: 35px; display: grid; grid-template-columns: 111px 267px 1fr; align-items: center; }
.clock { text-align: center; line-height: 13px; color: #1c5795; padding-right: 4px; }
.clock .now { display: block; width: 100%; font-size: 14px; font-weight: 700; line-height: 15px; color: var(--blue); padding-right: 2px; }
.control-icons { display: flex; gap: 10px; padding-left: 14px; }
.control-icons .apart { margin-left: 7px; }
.row { display: grid; grid-template-columns: 60px 35px 34px 178px 135px 117px 1fr; padding-left: 4px; height: 19px; align-items: center; border-bottom: 1px solid #151515; }
.cell { display: flex; align-items: center; height: 10px; white-space: nowrap; }
.row.head { height: 20px; background: #363636; border: solid #0a0a0a; border-width: 1px 0; }
.tick { border-left: 1px solid #0c0c0c; }
.cell.av, .cell.switches { display: grid; grid-template-columns: repeat(4, 15px); grid-template-rows: 100%; justify-items: center; }
.cell.switches { grid-template-columns: repeat(8, 15px); padding-left: 1px; }
.av svg { width: 11px; height: 11px; }
.switches svg { width: 13px; height: 13px; }
.switches em { font: italic 13px/14px "Liberation Serif", serif; }
.label-head { justify-content: center; padding-left: 8px; }
.label-head svg { width: 13px; height: 13px; }
.num { padding-left: 6px; }
.big { font-size: 13px; padding-left: 5px; color: #c6c6c6; }
.layer { background: #474747; }
.layer .cell, .prop .cell { height: 18px; }
.slots i { width: 13px; height: 14px; background: #393939; display: grid; place-items: center; }
.dim { color: #888; }
.label-cell { justify-content: flex-end; gap: 5px; padding-right: 1px; }
.label-cell .chip { width: 13px; height: 14px; }
.layer .num { padding-left: 8px; font-size: 12px; color: #d0d0d0; }
.source .tt { width: 20px; padding-left: 5px; font: 700 13px/16px "Liberation Serif", serif; }
.source .picked { flex: 1; line-height: 18px; padding-left: 4px; margin-right: 2px; }
.parent { gap: 6px; padding-left: 6px; }
.parent .pick { width: 90px; height: 17px; background: #1c1c1c; border-color: #242424; }
.parent select { font-size: 12px; }
.prop { grid-template-columns: 60px 247px 135px 1fr; }
.prop .nav { justify-content: space-between; padding: 0 20px 0 3px; }
.prop-name { padding-left: 62px; gap: 5px; font-size: 13px; color: #c6c6c6; }
.prop-name span { margin-left: 2px; }
.value { padding-left: 5px; }
.value button { color: var(--blue); }
.prop-link { padding-left: 18px; }

.tracks { position: relative; display: flex; flex-direction: column; overflow: hidden; padding-top: 5px; }
.navigator, .workarea { display: flex; border: solid #0a0a0a; border-width: 1px 0; height: 10px; flex: none; }
.workarea { height: 17px; }
.cap { width: 7px; background: #2d8ceb; }
.cap.left { border-right: 1px solid #0a0a0a; border-radius: 5px 0 0 5px; }
.cap.right { border-left: 1px solid #0a0a0a; border-radius: 0 5px 5px 0; }
.fill { flex: 1; background: #646464; }
.ruler { list-style: none; margin: 0; padding: 0 7px; height: 19px; display: flex; justify-content: space-between; flex: none; }
.ruler li { width: 0; display: flex; flex-direction: column; align-items: center; justify-content: space-between; white-space: nowrap; line-height: 14px; color: #b4b4b4; }
.ruler li::after { content: ""; width: 1px; height: 4px; background: #aaa; flex: none; }
.cache { height: 4px; padding: 0 7px; border-bottom: 1px solid #0a0a0a; flex: none; }
.cache i { display: block; height: 3px; background: #26b32f; }
.track-row { height: 19px; padding: 0 7px; border-bottom: 1px solid #1e1e1e; flex: none; }
.bar-row { background: #3f3f3f; padding-top: 1px; }
.bar { display: block; height: 16px; background: linear-gradient(#ad4c4c, #a34646); border: solid #c39a9a; border-width: 1px 0 0 1px; }
.key-row { background: linear-gradient(#343434, #343434) content-box; }
.keys { position: relative; height: 18px; color: #c0c0c0; }
.keys svg { position: absolute; top: 4px; width: 10px; height: 10px; margin-left: -5px; }
.void { flex: 1; margin: 0 7px 1px; background: #303030; }
.playhead-layer { position: absolute; inset: 5px 7px 1px; pointer-events: none; }
.playhead { position: absolute; top: 0; bottom: 0; width: 1px; background: linear-gradient(#2d8ceb 0 9px, transparent 9px 28px, #2d8ceb 28px); }
.playhead svg { position: absolute; top: 15px; left: -5px; width: 11px; height: 14px; }
.gutter { display: grid; align-content: start; justify-items: center; row-gap: 6px; padding-top: 37px; }
.tl-foot { height: 17px; flex: none; }
.tl-foot-in { width: 687px; height: 17px; border-top: 1px solid #0a0a0a; display: grid; grid-template-columns: 312px 133px 1fr; align-items: center; background: #1f1f1f; }
.foot-icons { display: flex; gap: 6px; padding-left: 6px; }
.mode { height: 15px; border: 1px solid #292929; border-radius: 3px; color: #a5a5a5; }
.zoomer { display: flex; align-items: center; justify-content: flex-end; gap: 10px; padding-right: 5px; }
.hillsm { width: 10px; height: 6px; }
.zoomer input { appearance: none; width: 50px; height: 12px; background: linear-gradient(#444, #444) center / 100% 2px no-repeat; }
.zoomer input::-webkit-slider-thumb { appearance: none; width: 10px; height: 10px; border: 2px solid #999; border-radius: 50%; background: #232323; }
.zoomer .w16 { height: 9px; }
small { font-size: 11px; color: #8a8a8a; }
```
